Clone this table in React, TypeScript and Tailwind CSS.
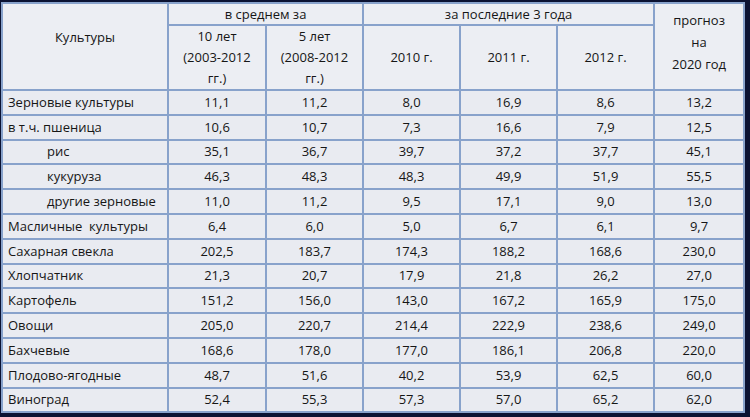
import React from "react";

const rows: { name: string; indent?: boolean; v: string[] }[] = [
  { name: "Зерновые культуры", v: ["11,1", "11,2", "8,0", "16,9", "8,6", "13,2"] },
  { name: "в т.ч. пшеница", v: ["10,6", "10,7", "7,3", "16,6", "7,9", "12,5"] },
  { name: "рис", indent: true, v: ["35,1", "36,7", "39,7", "37,2", "37,7", "45,1"] },
  { name: "кукуруза", indent: true, v: ["46,3", "48,3", "48,3", "49,9", "51,9", "55,5"] },
  { name: "другие зерновые", indent: true, v: ["11,0", "11,2", "9,5", "17,1", "9,0", "13,0"] },
  { name: "Масличные  культуры", v: ["6,4", "6,0", "5,0", "6,7", "6,1", "9,7"] },
  { name: "Сахарная свекла", v: ["202,5", "183,7", "174,3", "188,2", "168,6", "230,0"] },
  { name: "Хлопчатник", v: ["21,3", "20,7", "17,9", "21,8", "26,2", "27,0"] },
  { name: "Картофель", v: ["151,2", "156,0", "143,0", "167,2", "165,9", "175,0"] },
  { name: "Овощи", v: ["205,0", "220,7", "214,4", "222,9", "238,6", "249,0"] },
  { name: "Бахчевые", v: ["168,6", "178,0", "177,0", "186,1", "206,8", "220,0"] },
  { name: "Плодово-ягодные", v: ["48,7", "51,6", "40,2", "53,9", "62,5", "60,0"] },
  { name: "Виноград", v: ["52,4", "55,3", "57,3", "57,0", "65,2", "62,0"] },
];

const cell = "border-2 border-[#88a2cb] bg-[#e9ebf1] p-0";

export default function App() {
  return (
    <div
      className="w-[750px] h-[417px] bg-[#0b1232] pt-[2px] pl-[1px] overflow-hidden"
      style={{ fontFamily: "'Open Sans', Lato, sans-serif" }}
    >
      <table className="table-fixed border-collapse w-[742px] text-[13px] text-[#161616] leading-none">
        <colgroup>
          <col className="w-[166px]" />
          <col className="w-[98px]" />
          <col className="w-[97px]" />
          <col className="w-[97px]" />
          <col className="w-[97px]" />
          <col className="w-[97px]" />
          <col className="w-[90px]" />
        </colgroup>
        <thead>
          <tr className="h-[22px]">
            <th rowSpan={2} className={`${cell} bg-[#eceef3] font-normal align-top pt-[27px]`}>
              Культуры
            </th>
            <th colSpan={2} className={`${cell} bg-[#eceef3] font-normal`}>
              в среднем за
            </th>
            <th colSpan={3} className={`${cell} bg-[#eceef3] font-normal`}>
              за последние 3 года
            </th>
            <th rowSpan={2} className={`${cell} bg-[#eceef3] font-normal align-top pt-[5px] leading-[22px]`}>
              прогноз
              <br />
              на
              <br />
              2020 год
            </th>
          </tr>
          <tr className="h-[63px]">
            <th className={`${cell} bg-[#eceef3] font-normal leading-[21px]`}>
              10 лет
              <br />
              (2003-2012
              <br />
              гг.)
            </th>
            <th className={`${cell} bg-[#eceef3] font-normal leading-[21px]`}>
              5 лет
              <br />
              (2008-2012
              <br />
              гг.)
            </th>
            <th className={`${cell} bg-[#eceef3] font-normal`}>2010 г.</th>
            <th className={`${cell} bg-[#eceef3] font-normal`}>2011 г.</th>
            <th className={`${cell} bg-[#eceef3] font-normal`}>2012 г.</th>
          </tr>
        </thead>
        <tbody>
          {rows.map((r) => (
            <tr key={r.name} className="h-[24.8px]">
              <td className={`${cell} whitespace-pre ${r.indent ? "pl-[44px]" : "pl-[5px]"}`}>{r.name}</td>
              {r.v.map((x, i) => (
                <td key={i} className={`${cell} text-center`}>
                  {x}
                </td>
              ))}
            </tr>
          ))}
        </tbody>
      </table>
    </div>
  );
}
